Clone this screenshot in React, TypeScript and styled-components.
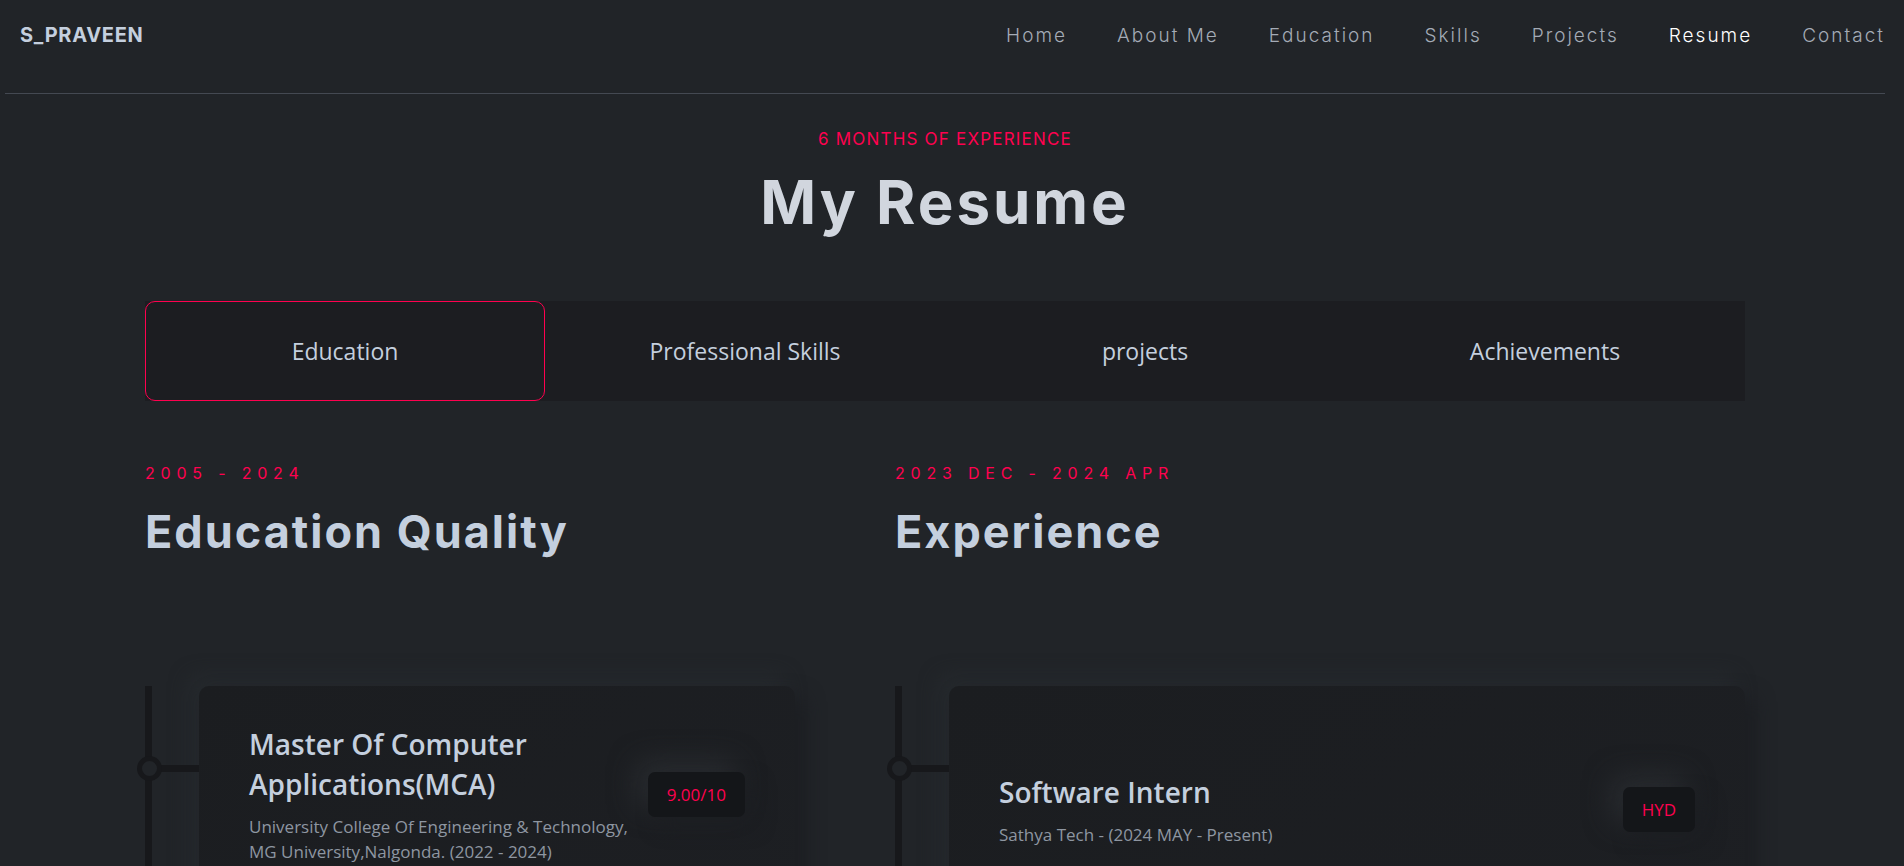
import { FC } from 'react';
import styled, { createGlobalStyle } from 'styled-components';

const accent = '#ff014f';
const headingColor = '#c4cfde';
const displayFont = "Inter, 'Liberation Sans', sans-serif";
const textFont = "'Open Sans', 'Noto Sans', sans-serif";

const GlobalStyle = createGlobalStyle`
  *,
  *::before,
  *::after {
    box-sizing: border-box;
  }

  html,
  body {
    margin: 0;
    background: #212428;
    overflow: hidden;
  }
`;

const Page = styled.div`
  width: 1890px;
  min-height: 866px;
  background: #212428;
  font-family: ${textFont};
`;

const Header = styled.header`
  display: flex;
  align-items: center;
  justify-content: space-between;
  height: 94px;
  margin: 0 5px 0 5px;
  padding: 0 0 23px 15px;
  border-bottom: 1px solid #444952;

  .logo {
    font-family: ${displayFont};
    font-size: 20px;
    font-weight: 700;
    letter-spacing: 0.7px;
    color: ${headingColor};
  }
`;

const Nav = styled.nav`
  display: flex;
  align-items: center;
  gap: 50px;
`;

const NavLink = styled.a<{ $active?: boolean }>`
  font-family: ${displayFont};
  font-size: 19px;
  font-weight: 300;
  letter-spacing: 2px;
  color: ${p => (p.$active ? '#ffffff' : '#a4abb6')};
  text-decoration: none;
`;

const Section = styled.section`
  width: 1600px;
  margin: 0 auto;
  padding-top: 33px;

  .eyebrow {
    margin: 0;
    text-align: center;
    font-family: ${displayFont};
    font-size: 17px;
    line-height: 24px;
    letter-spacing: 1.2px;
    color: ${accent};
  }

  .title {
    margin: 16px 0 0;
    text-align: center;
    font-family: ${displayFont};
    font-size: 60px;
    font-weight: 700;
    line-height: 70px;
    letter-spacing: 3px;
    color: #d1d6de;
  }
`;

const Tabs = styled.div`
  display: grid;
  grid-template-columns: repeat(4, 1fr);
  height: 100px;
  margin-top: 64px;
  background: #1c1d21;
`;

const Tab = styled.button<{ $active?: boolean }>`
  border: 1px solid ${p => (p.$active ? accent : 'transparent')};
  border-radius: 10px;
  background: transparent;
  font-family: ${textFont};
  font-size: 23px;
  color: ${headingColor};
  cursor: pointer;
`;

const Columns = styled.div`
  display: grid;
  grid-template-columns: 650px 850px;
  gap: 100px;
  margin-top: 61px;
`;

const ColumnHead = styled.div`
  .period {
    font-family: ${displayFont};
    font-size: 16px;
    line-height: 22px;
    letter-spacing: 5.8px;
    color: ${accent};
  }

  h2 {
    margin: 20px 0 0;
    font-family: ${displayFont};
    font-size: 45px;
    font-weight: 700;
    line-height: 56px;
    letter-spacing: 2px;
    color: ${headingColor};
  }
`;

const Timeline = styled.div`
  position: relative;
  margin-top: 126px;
  padding-left: 54px;

  &::before {
    content: '';
    position: absolute;
    top: 0;
    bottom: 0;
    left: 0;
    width: 7px;
    background: #17181b;
  }
`;

const Card = styled.div<{ $top: number }>`
  position: relative;
  min-height: 260px;
  padding: ${p => p.$top}px 50px 40px;
  border-radius: 10px;
  background: linear-gradient(145deg, #1b1d20, #1d1f23);
  box-shadow: 10px 10px 19px #1c1e22, -10px -10px 19px #262a2e;

  /* timeline marker + connector */
  &::before {
    content: '';
    position: absolute;
    top: 70px;
    left: -62px;
    width: 25px;
    height: 25px;
    border: 5px solid #17181b;
    border-radius: 50%;
    background: #212428;
    z-index: 1;
  }

  &::after {
    content: '';
    position: absolute;
    top: 79px;
    left: -40px;
    width: 40px;
    height: 7px;
    background: #17181b;
  }
`;

const CardHeader = styled.div`
  display: flex;
  align-items: center;
  justify-content: space-between;
  gap: 8px;

  .info {
    flex: 0 1 392px;
  }

  h3 {
    margin: 0 0 10px;
    font-size: 28px;
    font-weight: 600;
    line-height: 40px;
    color: ${headingColor};
  }

  p {
    margin: 0;
    font-size: 17px;
    line-height: 25px;
    color: #8e96a1;
  }
`;

const Badge = styled.span`
  display: inline-flex;
  flex-shrink: 0;
  align-items: center;
  height: 45px;
  padding: 0 19px;
  border-radius: 7px;
  background: #141619;
  font-size: 17px;
  color: ${accent};
  box-shadow: 10px 10px 19px #1c1e22, -10px -10px 28px #2a2d31;
`;

type ResumeItem = {
  title: string;
  place: string;
  badge: string;
  top: number;
};

type ResumeColumn = {
  period: string;
  heading: string;
  items: ResumeItem[];
};

const navItems = ['Home', 'About Me', 'Education', 'Skills', 'Projects', 'Resume', 'Contact'];
const tabs = ['Education', 'Professional Skills', 'projects', 'Achievements'];

const columns: ResumeColumn[] = [
  {
    period: '2005 - 2024',
    heading: 'Education Quality',
    items: [
      {
        title: 'Master Of Computer Applications(MCA)',
        place: 'University College Of Engineering & Technology, MG University,Nalgonda. (2022 - 2024)',
        badge: '9.00/10',
        top: 38,
      },
    ],
  },
  {
    period: '2023 DEC - 2024 APR',
    heading: 'Experience',
    items: [
      {
        title: 'Software Intern',
        place: 'Sathya Tech - (2024 MAY - Present)',
        badge: 'HYD',
        top: 86,
      },
    ],
  },
];

const ResumeCard: FC<{ item: ResumeItem }> = ({ item }) => (
  <Card $top={item.top}>
    <CardHeader>
      <div className="info">
        <h3>{item.title}</h3>
        <p>{item.place}</p>
      </div>
      <Badge>{item.badge}</Badge>
    </CardHeader>
  </Card>
);

const App: FC = () => (
  <Page>
    <GlobalStyle />
    <Header>
      <span className="logo">S_PRAVEEN</span>
      <Nav>
        {navItems.map(label => (
          <NavLink key={label} href="#" $active={label === 'Resume'}>
            {label}
          </NavLink>
        ))}
      </Nav>
    </Header>

    <Section>
      <p className="eyebrow">6 MONTHS OF EXPERIENCE</p>
      <h1 className="title">My Resume</h1>

      <Tabs>
        {tabs.map((label, i) => (
          <Tab key={label} $active={i === 0}>
            {label}
          </Tab>
        ))}
      </Tabs>

      <Columns>
        {columns.map(col => (
          <div key={col.heading}>
            <ColumnHead>
              <div className="period">{col.period}</div>
              <h2>{col.heading}</h2>
            </ColumnHead>
            <Timeline>
              {col.items.map(item => (
                <ResumeCard key={item.title} item={item} />
              ))}
            </Timeline>
          </div>
        ))}
      </Columns>
    </Section>
  </Page>
);

export default App;
